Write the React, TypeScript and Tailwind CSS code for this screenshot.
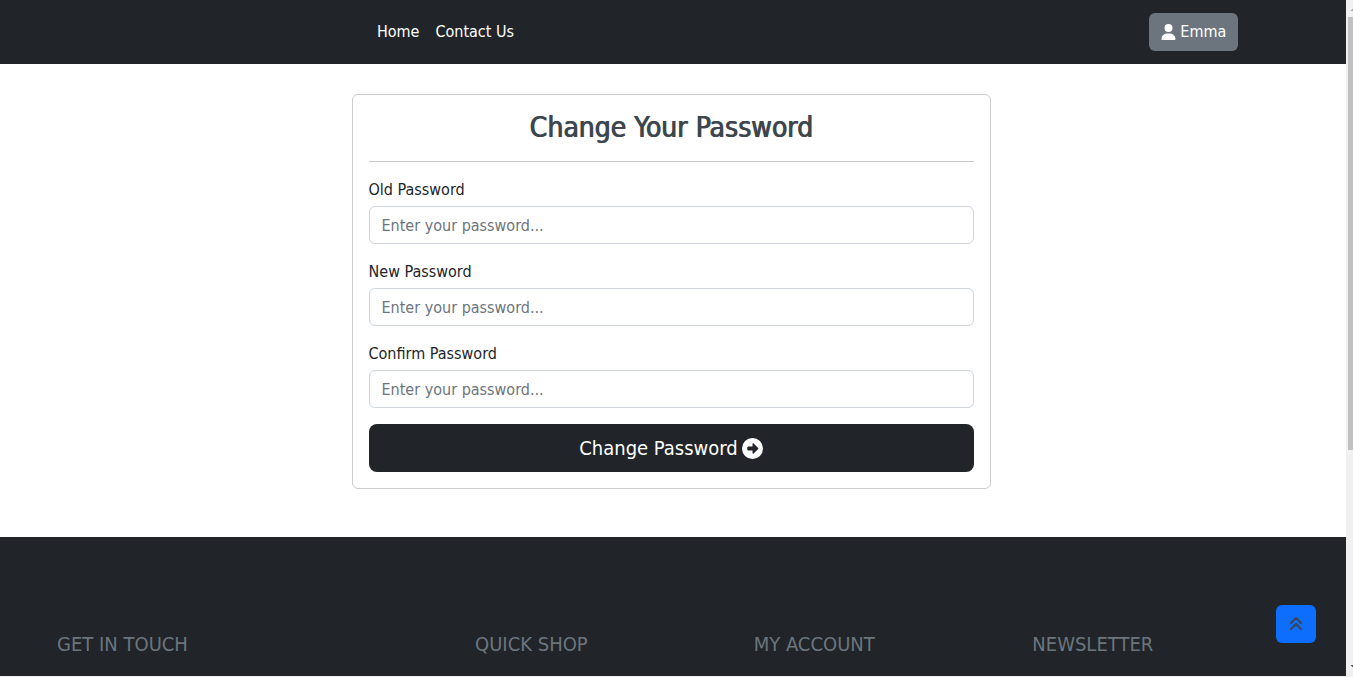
import { useState } from "react";
import { FaAnglesUp, FaCircleRight, FaUser } from "react-icons/fa6";

const fields = [
  { id: "old-password", label: "Old Password" },
  { id: "new-password", label: "New Password" },
  { id: "confirm-password", label: "Confirm Password" },
];

const footerTitles = ["GET IN TOUCH", "QUICK SHOP", "MY ACCOUNT", "NEWSLETTER"];

function Header() {
  return (
    <header className="flex h-16 items-center justify-between bg-[#212529] pr-[8%] pl-[28%] text-white">
      <nav className="flex gap-4">
        <a href="#home">Home</a>
        <a href="#contact">Contact Us</a>
      </nav>
      <button type="button" className="flex h-[38px] items-center gap-1 rounded-md bg-[#6c757d] px-3">
        <FaUser className="h-4 w-[15px]" />
        Emma
      </button>
    </header>
  );
}

function PasswordForm() {
  const [values, setValues] = useState<Record<string, string>>({});
  return (
    <main className="pt-[30px] pr-5 pb-12 pl-4">
      <form
        className="mx-auto max-w-[639px] rounded-md border border-[#cccdce] p-4"
        onSubmit={(e) => e.preventDefault()}
      >
        <h1 className="text-center text-[28px] leading-[34px] font-medium text-[#3d464d] [text-shadow:1px_0_0_currentColor]">
          Change Your Password
        </h1>
        <hr className="my-4 border-[#c8c9ca]" />
        {fields.map((f) => (
          <div key={f.id} className="mb-4">
            <label htmlFor={f.id} className="mb-1 block leading-6">
              {f.label}
            </label>
            <input
              id={f.id}
              type="password"
              placeholder="Enter your password..."
              value={values[f.id] ?? ""}
              onChange={(e) => setValues({ ...values, [f.id]: e.target.value })}
              className="block h-[38px] w-full rounded-md border border-[#ced4da] px-3 placeholder:text-[#6c757d]"
            />
          </div>
        ))}
        <button
          type="submit"
          className="flex h-12 w-full items-center justify-center gap-1 rounded-lg bg-[#212529] text-xl text-white"
        >
          Change Password
          <FaCircleRight className="size-[21px]" />
        </button>
      </form>
    </main>
  );
}

function Footer() {
  return (
    <footer className="grow bg-[#212529] px-[46px] pt-[95px]">
      <div className="grid grid-cols-[3fr_2fr_2fr_2fr]">
        {footerTitles.map((t) => (
          <h2 key={t} className="pl-[11px] text-xl leading-6 text-[#6c757d]">
            {t}
          </h2>
        ))}
      </div>
    </footer>
  );
}

function ScrollTrack() {
  return (
    <div className="flex w-[7px] flex-col overflow-hidden bg-[#f0f0f0] pl-0.5" aria-hidden="true">
      <svg viewBox="0 0 5 17" className="h-[17px] w-[5px] shrink-0">
        <path d="M2.5 11 6.5 7v4z" fill="#a3a3a3" />
      </svg>
      <div className="h-[433px] bg-[#c1c1c1]" />
      <svg viewBox="0 0 5 17" className="mt-auto h-[17px] w-[5px] shrink-0">
        <path d="M2.5 5 6.5 9V5z" fill="#505050" />
      </svg>
    </div>
  );
}

export default function App() {
  return (
    <div className="flex min-h-screen bg-white font-['DejaVu_Sans_Condensed','DejaVu_Sans',sans-serif] text-base text-[#212529]">
      <div className="flex grow flex-col border-b border-[#f0f0f0]">
        <Header />
        <PasswordForm />
        <Footer />
      </div>
      <ScrollTrack />
      <a
        href="#top"
        aria-label="Back to top"
        className="fixed right-[37px] bottom-[34px] flex h-[38px] w-10 items-center justify-center rounded-md bg-[#0d6efd] text-[#3d464d]"
      >
        <FaAnglesUp className="size-4" />
      </a>
    </div>
  );
}
